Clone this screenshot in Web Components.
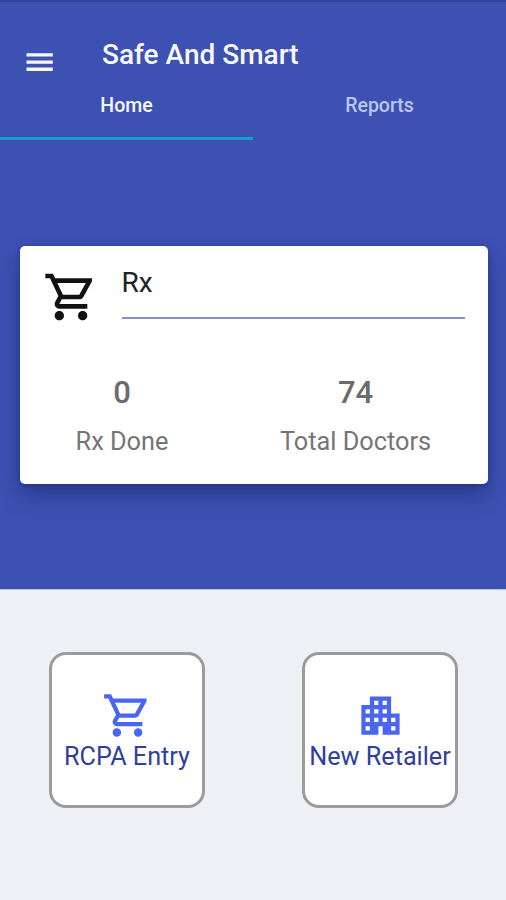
<!DOCTYPE html>
<html lang="en">
<head>
<meta charset="utf-8">
<title>Safe And Smart</title>
<style>
html,body{margin:0;height:100%}
body{font-family:Roboto,"Liberation Sans",sans-serif;background:#eef0f5;overflow:hidden}
</style>
</head>
<body>
<safe-app></safe-app>
<script>
const define = (name, html) => customElements.define(name, class extends HTMLElement {
  constructor() {
    super();
    this.attachShadow({mode: 'open'}).innerHTML = html;
  }
});

define('icon-cart', `<style>:host{display:block}svg{display:block;width:100%;height:100%;fill:currentColor}</style>
<svg viewBox="0 0 24 24"><path d="M15.55 13c.75 0 1.41-.41 1.75-1.03l3.7-6.7L21 4H5.21l-.94-2H1v2h2l3.6 7.59-1.35 2.44C4.52 15.37 5.48 17 7 17h12v-2H7l1.1-2h7.45zM6.16 6h12.15l-2.76 5H8.53L6.16 6zM7 18c-1.1 0-1.99.9-1.99 2S5.9 22 7 22s2-.9 2-2-.9-2-2-2zm10 0c-1.1 0-1.99.9-1.99 2s.89 2 1.99 2 2-.9 2-2-.9-2-2-2z"/></svg>`);

define('icon-building', `<style>:host{display:block}svg{display:block;width:100%;height:100%;fill:currentColor}</style>
<svg viewBox="0 0 24 24"><path d="M17 11V3H7v4H3v14h8v-4h2v4h8V11h-4zM7 19H5v-2h2v2zm0-4H5v-2h2v2zm0-4H5V9h2v2zm4 4H9v-2h2v2zm0-4H9V9h2v2zm0-4H9V5h2v2zm4 8h-2v-2h2v2zm0-4h-2V9h2v2zm0-4h-2V5h2v2zm4 12h-2v-2h2v2zm0-4h-2v-2h2v2z"/></svg>`);

define('app-bar', `<style>
:host{display:flex;height:86px;box-sizing:border-box;border-top:2px solid #2f4295;color:#f7f8ff}
svg{flex:none;width:27px;height:18px;margin:51px 49px 0 26px;fill:currentColor}
h1{margin:36px 0 0;font-size:28px;line-height:33px;font-weight:500;white-space:nowrap}
</style><svg viewBox="0 0 27 18"><path d="M.5.3h26.3v3.3H.5zM.5 7.4h26.3v3.3H.5zM.5 14.6h26.3v3.3H.5z"/></svg><h1><slot></slot></h1>`);

define('tab-item', `<style>
:host{display:block;flex:1;height:54px;box-sizing:border-box;text-align:center;padding-top:8px;font-size:19.5px;line-height:24px;font-weight:500;color:#bcc6f5;border-bottom:3px solid transparent}
:host([active]){color:#f7f8ff;border-bottom-color:#149fc8}
</style><slot></slot>`);

define('tab-bar', `<style>:host{display:flex}</style><slot></slot>`);

define('stat-item', `<style>
:host{display:block;flex:1;text-align:center;color:#757575;white-space:nowrap}
b{display:block;font-size:31px;line-height:36px;font-weight:500;color:#6b6b6b}
span{display:block;margin-top:16px;font-size:25.3px;line-height:30px}
</style><b><slot name="value"></slot></b><span><slot></slot></span>`);

define('rx-card', `<style>
:host{display:block;box-sizing:border-box;margin:106px 18.5px 0 20px;height:238px;padding:22px 23px 0 22px;background:#fff;border-radius:5px;box-shadow:0 12px 22px rgba(20,30,100,.45),0 1px 5px rgba(20,30,100,.35)}
.top{display:flex;height:56px}
icon-cart{flex:none;width:56px;height:56px;color:#111;margin:1px 0 0 1px}
.field{flex:1;margin-left:22.5px;height:51px;box-sizing:border-box;border-bottom:2px solid #858fc9;font-size:28px;line-height:30px;color:#222}
.stats{display:flex;margin:51px 0 0 -22px}
</style>
<div class="top"><icon-cart></icon-cart><div class="field"><slot name="label"></slot></div></div>
<div class="stats"><slot></slot></div>`);

define('action-tile', `<style>
:host{display:flex;flex-direction:column;align-items:center;box-sizing:border-box;width:156px;height:156px;padding-top:35px;background:#fff;border:3px solid #9b9b9b;border-radius:17px;color:#4a66f0}
.icon{width:51px;height:51px}
.label{font-size:25.2px;line-height:32px;color:#303f9b;white-space:nowrap}
</style><div class="icon"><slot name="icon"></slot></div><div class="label"><slot></slot></div>`);

define('safe-app', `<style>
:host{display:block;height:900px}
.hero{height:590px;background:#3d51b2;border-bottom:1px solid #b9bde9;box-sizing:border-box;display:flow-root}
.actions{display:flex;gap:97px;padding:62px 0 0 49px}
</style>
<section class="hero">
<app-bar>Safe And Smart</app-bar>
<tab-bar><tab-item active>Home</tab-item><tab-item>Reports</tab-item></tab-bar>
<rx-card><span slot="label">Rx</span>
<stat-item style="flex:0 0 204px"><span slot="value">0</span>Rx Done</stat-item>
<stat-item style="flex:0 0 263px"><span slot="value">74</span>Total Doctors</stat-item></rx-card>
</section>
<section class="actions">
<action-tile><icon-cart slot="icon"></icon-cart>RCPA Entry</action-tile>
<action-tile><icon-building slot="icon"></icon-building>New Retailer</action-tile>
</section>`);
</script>
</body>
</html>
